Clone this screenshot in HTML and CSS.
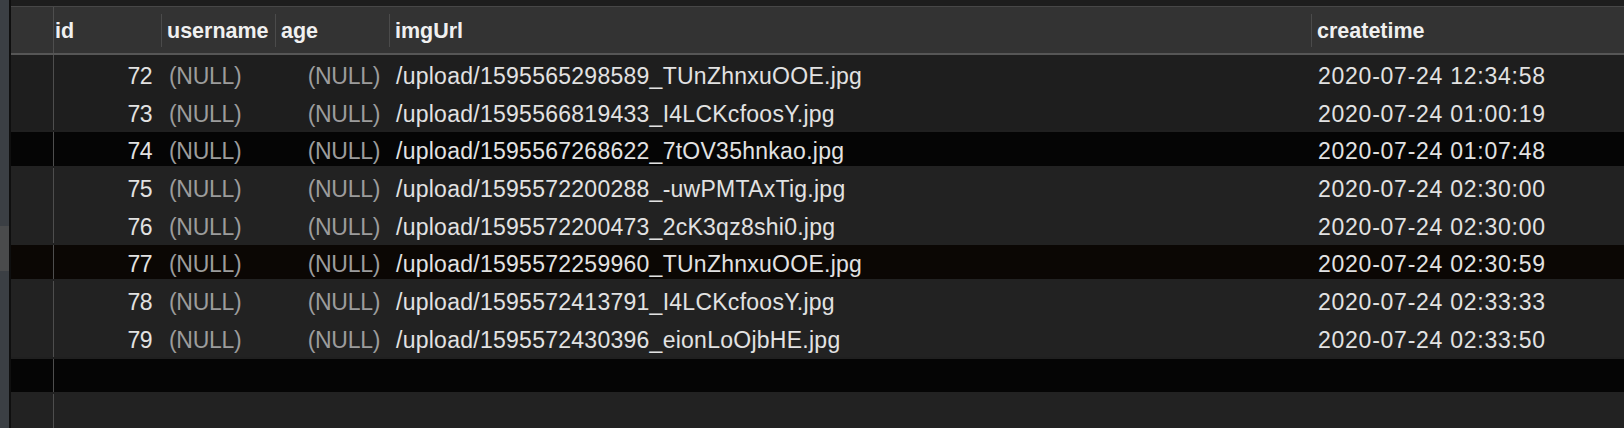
FILE: index.html
```html
<!DOCTYPE html>
<html lang="en">
<head>
<meta charset="utf-8">
<title>Table</title>
<link rel="stylesheet" href="styles.css">
</head>
<body>
<div class="app">
  <div class="strip">
    <div class="strip-top"></div>
    <div class="strip-patch"></div>
    <div class="strip-bottom"></div>
  </div>
  <div class="table">
    <div class="topband"></div>
    <div class="header grid">
      <div class="hgutter"></div>
      <div class="hcell hid"><span class="hl nosep">id</span></div>
      <div class="hcell"><span class="hl">username</span></div>
      <div class="hcell"><span class="hl">age</span></div>
      <div class="hcell"><span class="hl">imgUrl</span></div>
      <div class="hcell"><span class="hl">createtime</span></div>
    </div>
    <div class="body">
      <div class="row grid r-a"><div class="gutter"></div><div class="c num">72</div><div class="c null">(NULL)</div><div class="c null right">(NULL)</div><div class="c url">/upload/1595565298589_TUnZhnxuOOE.jpg</div><div class="c date">2020-07-24 12:34:58</div></div>
      <div class="row grid r-a"><div class="gutter"></div><div class="c num">73</div><div class="c null">(NULL)</div><div class="c null right">(NULL)</div><div class="c url">/upload/1595566819433_I4LCKcfoosY.jpg</div><div class="c date">2020-07-24 01:00:19</div></div>
      <div class="row grid r-black"><div class="gutter"></div><div class="c num">74</div><div class="c null">(NULL)</div><div class="c null right">(NULL)</div><div class="c url">/upload/1595567268622_7tOV35hnkao.jpg</div><div class="c date">2020-07-24 01:07:48</div></div>
      <div class="row grid r-b"><div class="gutter"></div><div class="c num">75</div><div class="c null">(NULL)</div><div class="c null right">(NULL)</div><div class="c url">/upload/1595572200288_-uwPMTAxTig.jpg</div><div class="c date">2020-07-24 02:30:00</div></div>
      <div class="row grid r-b"><div class="gutter"></div><div class="c num">76</div><div class="c null">(NULL)</div><div class="c null right">(NULL)</div><div class="c url">/upload/1595572200473_2cK3qz8shi0.jpg</div><div class="c date">2020-07-24 02:30:00</div></div>
      <div class="row grid r-brown"><div class="gutter"></div><div class="c num">77</div><div class="c null">(NULL)</div><div class="c null right">(NULL)</div><div class="c url">/upload/1595572259960_TUnZhnxuOOE.jpg</div><div class="c date">2020-07-24 02:30:59</div></div>
      <div class="row grid r-b"><div class="gutter"></div><div class="c num">78</div><div class="c null">(NULL)</div><div class="c null right">(NULL)</div><div class="c url">/upload/1595572413791_I4LCKcfoosY.jpg</div><div class="c date">2020-07-24 02:33:33</div></div>
      <div class="row grid r-b"><div class="gutter"></div><div class="c num">79</div><div class="c null">(NULL)</div><div class="c null right">(NULL)</div><div class="c url">/upload/1595572430396_eionLoOjbHE.jpg</div><div class="c date">2020-07-24 02:33:50</div></div>
      <div class="row grid r-black"><div class="gutter"></div></div>
      <div class="filler grid"><div class="gutter"></div></div>
    </div>
  </div>
</div>
</body>
</html>
```

FILE: styles.css
```css
* { box-sizing: border-box; }
html, body { margin: 0; padding: 0; }
body {
  background: #1f1f1f;
  font-family: "Liberation Sans", Arial, sans-serif;
  width: 1624px;
  height: 428px;
  overflow: hidden;
}
.app {
  display: flex;
  height: 428px;
}
.strip {
  width: 11px;
  flex: none;
  display: flex;
  flex-direction: column;
  border-right: 2px solid #0f0f0f;
  background: #3b3f44;
}
.strip-top { height: 226px; background: #3b3f44; }
.strip-patch { height: 45px; background: #4a4b4c; }
.strip-bottom { flex: 1; background: #3b3f44; }

.table {
  flex: 1;
  display: flex;
  flex-direction: column;
  min-width: 0;
}
.topband {
  height: 7px;
  background: #1d1d1d;
  border-bottom: 1px solid #474747;
  flex: none;
}
.grid {
  display: grid;
  grid-template-columns: 43px 107px 114px 114px 922px 1fr;
}
.header {
  height: 48px;
  background: #333333;
  border-bottom: 2px solid #565656;
  flex: none;
}
.hgutter {
  border-right: 1px solid #4e4e4e;
}
.hcell {
  display: flex;
  align-items: center;
}
.hl {
  display: flex;
  align-items: center;
  height: 33px;
  border-left: 1px solid #4b4b4b;
  padding-left: 5px;
  padding-top: 2px;
  font-size: 21.5px;
  font-weight: bold;
  color: #f0f0f0;
  white-space: nowrap;
}
.hl.nosep {
  border-left: none;
  padding-left: 1px;
}
.body {
  flex: 1;
  display: flex;
  flex-direction: column;
}
.row {
  height: 37.7px;
  flex: none;
  background: #1f1f1f;
}
.r-a { background: #1e1e1e; }
.r-b { background: #222222; }
.r-black {
  background: #050505;
  border-top: 2px solid #202020;
  border-bottom: 2px solid #222222;
}
.r-brown {
  background: #0b0704;
  border-top: 2px solid #222222;
  border-bottom: 2px solid #222222;
}
.r-black .c, .r-brown .c { padding-top: 4px; }
.gutter {
  border-right: 1px solid #4e4e4e;
}
.c {
  font-size: 23px;
  line-height: 31.7px;
  padding-top: 6px;
  white-space: nowrap;
  overflow: hidden;
  color: #e2e2e2;
}
.num {
  text-align: right;
  padding-right: 9px;
  letter-spacing: -0.6px;
}
.null {
  color: #9c9c9c;
  padding-left: 8px;
  letter-spacing: -0.3px;
}
.null.right {
  text-align: right;
  padding-left: 0;
  padding-right: 9px;
}
.url {
  padding-left: 7px;
  letter-spacing: 0.26px;
}
.date {
  padding-left: 7px;
  letter-spacing: 0.75px;
}
.filler {
  flex: 1;
  background: #222222;
}
```
